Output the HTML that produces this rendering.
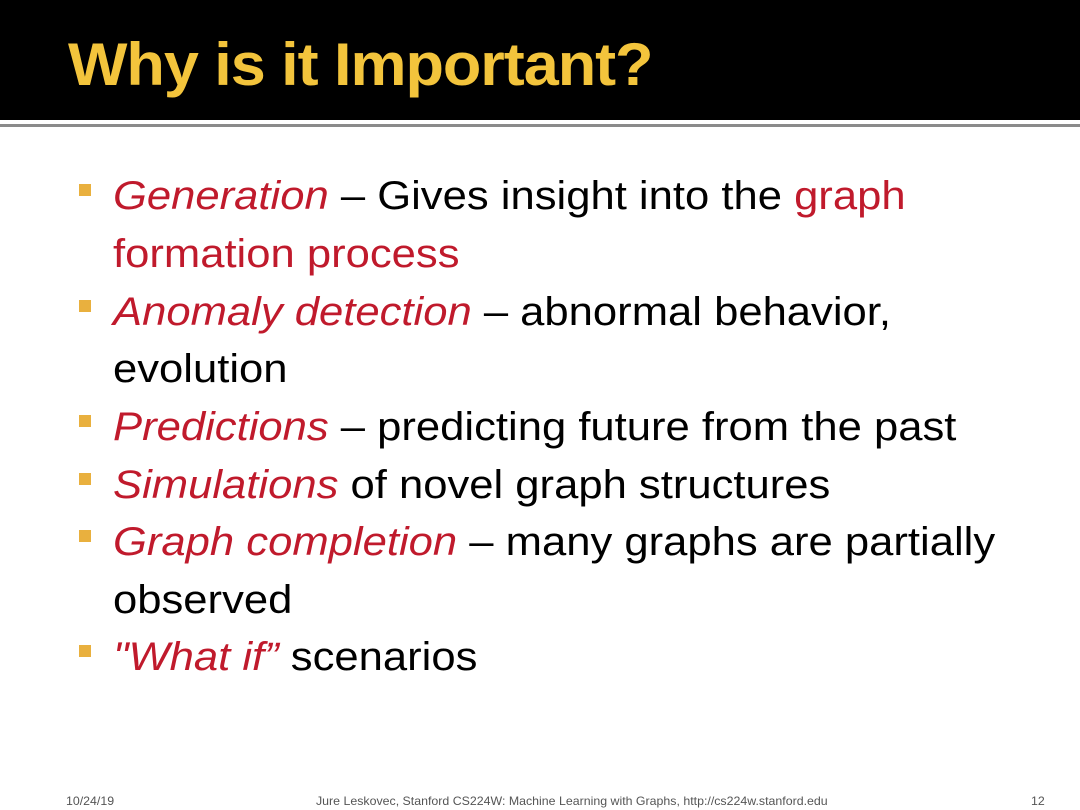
<!DOCTYPE html>
<html><head><meta charset="utf-8"><style>
body{margin:0;width:1080px;height:810px;background:#fff;position:relative;overflow:hidden;font-family:"Liberation Sans",sans-serif}
.hdr{position:absolute;left:0;top:0;width:1080px;height:120px;background:#000}
.rule{position:absolute;left:0;top:124px;width:1080px;height:3px;background:#8a8a8a}
.title{position:absolute;left:68px;top:30px;font-size:60px;font-weight:bold;color:#f3c43c;white-space:nowrap;transform-origin:left top;transform:scaleX(1.05);letter-spacing:-1px}
.l{position:absolute;left:113px;font-size:40px;color:#000;white-space:nowrap;transform-origin:left top;transform:scaleX(1.09);line-height:40px}
.r{color:#c01a2c}
.i{font-style:italic}
.b{position:absolute;left:79px;width:12px;height:12px;background:#e9b03e}
.f{position:absolute;top:794px;font-size:12px;color:#555;white-space:nowrap;transform-origin:left top;transform:scaleX(1.03)}
</style></head><body>
<div class="hdr"></div><div class="rule"></div>
<div class="title">Why is it Important?</div>

<div class="b" style="top:184px"></div>
<div class="l" style="top:176px"><span class="r i">Generation</span> – Gives insight into the <span class="r">graph</span></div>
<div class="l" style="top:234px"><span class="r">formation process</span></div>
<div class="b" style="top:300px"></div>
<div class="l" style="top:292px"><span class="r i">Anomaly detection</span> – abnormal behavior,</div>
<div class="l" style="top:349px">evolution</div>
<div class="b" style="top:415px"></div>
<div class="l" style="top:407px"><span class="r i">Predictions</span> – predicting future from the past</div>
<div class="b" style="top:473px"></div>
<div class="l" style="top:465px"><span class="r i">Simulations</span> of novel graph structures</div>
<div class="b" style="top:530px"></div>
<div class="l" style="top:522px"><span class="r i">Graph completion</span> – many graphs are partially</div>
<div class="l" style="top:580px">observed</div>
<div class="b" style="top:645px"></div>
<div class="l" style="top:637px"><span class="r i">"What if”</span> scenarios</div>

<div class="f" style="left:66px">10/24/19</div>
<div class="f" style="left:316px">Jure Leskovec, Stanford CS224W: Machine Learning with Graphs, http://cs224w.stanford.edu</div>
<div class="f" style="left:1031px">12</div>
</body></html>
